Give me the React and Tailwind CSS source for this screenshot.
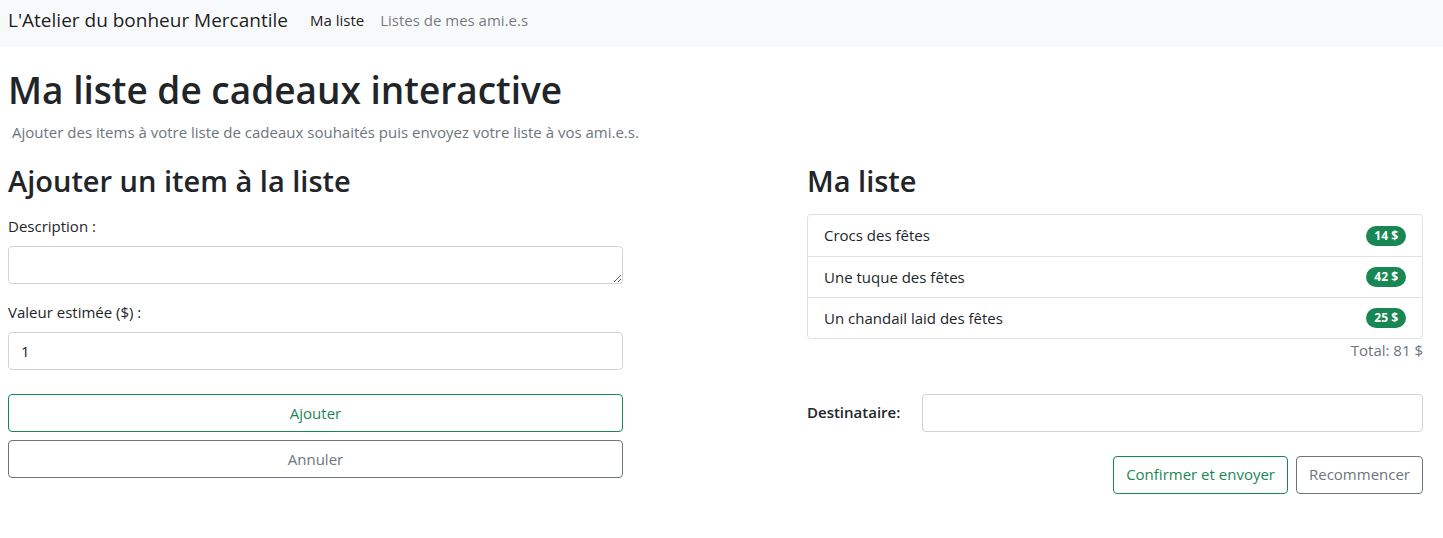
export default function App() {
  const items = [
    { name: 'Crocs des fêtes', price: 14 },
    { name: 'Une tuque des fêtes', price: 42 },
    { name: 'Un chandail laid des fêtes', price: 25 },
  ];
  const total = items.reduce((sum, i) => sum + i.price, 0);

  return (
    <div className="min-h-screen bg-white text-[#212529] font-['Open_Sans',sans-serif]">
      {/* Navbar */}
      <nav className="h-[47px] bg-[#f8f9fa] flex items-center px-2 pb-[6px]">
        <span className="text-[19px] text-[rgba(0,0,0,0.9)] mr-[14px]">L'Atelier du bonheur Mercantile</span>
        <a className="text-[15px] text-[rgba(0,0,0,0.9)] px-2">Ma liste</a>
        <a className="text-[15px] text-[rgba(0,0,0,0.55)] px-2">Listes de mes ami.e.s</a>
      </nav>

      <div className="px-2">
        <h1 className="text-[37px] font-semibold leading-tight mt-[20px]">Ma liste de cadeaux interactive</h1>
        <p className="text-[15px] text-[#6c757d] ml-1 mt-[8px]">
          Ajouter des items à votre liste de cadeaux souhaités puis envoyez votre liste à vos ami.e.s.
        </p>

        <div className="flex mt-[19px]">
          {/* Left column */}
          <div className="w-[615px]">
            <h2 className="text-[29px] font-semibold leading-tight">Ajouter un item à la liste</h2>
            <label className="block text-[15px] mt-[16px]">Description :</label>
            <textarea className="block w-full h-[38px] mt-[8px] border border-[#ced4da] rounded-[4px] px-3 py-1.5 text-[15px]" />
            <label className="block text-[15px] mt-[17px]">Valeur estimée ($) :</label>
            <input
              className="block w-full h-[38px] mt-[9px] border border-[#ced4da] rounded-[4px] px-3 text-[15px]"
              defaultValue="1"
            />
            <button className="block w-full h-[38px] mt-[24px] border border-[#198754] text-[#198754] rounded-[4px] text-[15px]">
              Ajouter
            </button>
            <button className="block w-full h-[38px] mt-[8px] border border-[#6c757d] text-[#6c757d] rounded-[4px] text-[15px]">
              Annuler
            </button>
          </div>

          {/* Right column */}
          <div className="w-[616px] ml-[184px]">
            <h2 className="text-[29px] font-semibold leading-tight">Ma liste</h2>
            <ul className="mt-[15px] border border-[#dee2e6] rounded-[4px]">
              {items.map((item, index) => (
                <li
                  key={index}
                  className={`h-[41px] flex items-center justify-between px-4 text-[15px] ${
                    index > 0 ? 'border-t border-[#dee2e6]' : ''
                  }`}
                >
                  <span>{item.name}</span>
                  <span className="bg-[#198754] text-white text-[12px] font-bold rounded-full px-[8px] h-[20px] flex items-center">
                    {item.price} $
                  </span>
                </li>
              ))}
            </ul>
            <p className="text-right text-[15px] text-[#6c757d]">Total: {total} $</p>

            <div className="flex items-center mt-[32px]">
              <label className="text-[15px] font-semibold w-[115px]">Destinataire:</label>
              <input className="flex-1 h-[38px] border border-[#ced4da] rounded-[4px] px-3 text-[15px]" />
            </div>

            <div className="flex justify-end gap-2 mt-[24px]">
              <button className="h-[38px] px-3 border border-[#198754] text-[#198754] rounded-[4px] text-[15px]">
                Confirmer et envoyer
              </button>
              <button className="h-[38px] px-3 border border-[#6c757d] text-[#6c757d] rounded-[4px] text-[15px]">
                Recommencer
              </button>
            </div>
          </div>
        </div>
      </div>
    </div>
  );
}
